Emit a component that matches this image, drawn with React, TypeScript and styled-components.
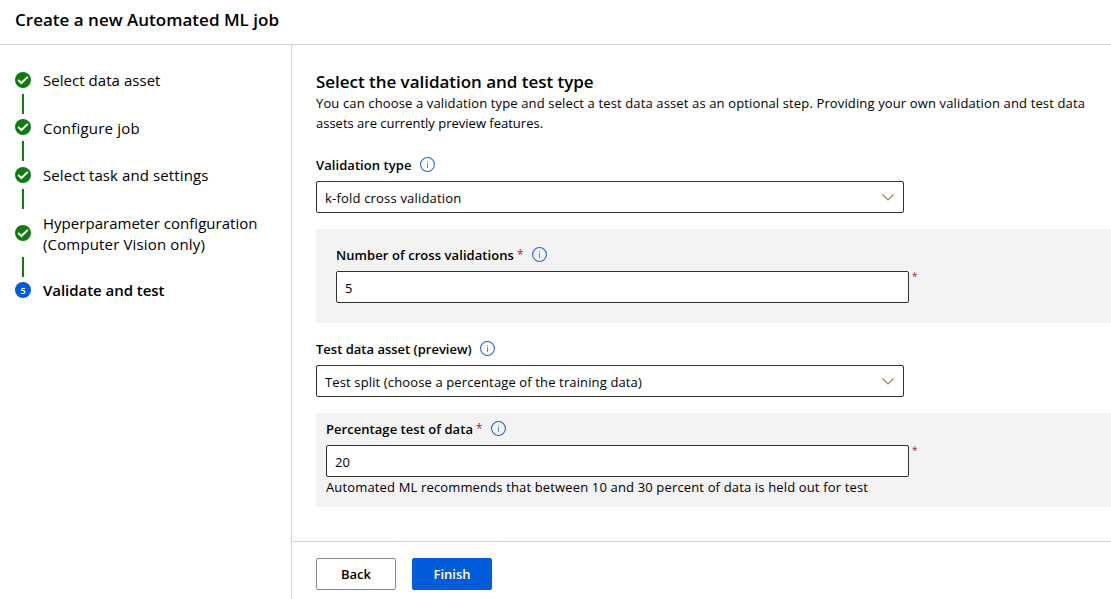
import React from 'react';
import styled, { createGlobalStyle } from 'styled-components';

const GlobalStyle = createGlobalStyle`
  *, *::before, *::after { box-sizing: border-box; }
  body {
    margin: 0;
    background: #fff;
    color: #000;
    font-family: "Open Sans", "Noto Sans", sans-serif;
    font-size: 13px;
    line-height: 20px;
  }
`;

const Page = styled.div`
  display: flex;
  flex-direction: column;
  height: 599px;
  overflow: hidden;
`;

const Header = styled.header`
  flex: none;
  height: 45px;
  padding: 8px 15px 0;
  border-bottom: 1px solid #d2d2d2;
`;

const Title = styled.h1`
  margin: 0;
  font-size: 17px;
  line-height: 24px;
  font-weight: 600;
  letter-spacing: 0.014px;
`;

const Body = styled.div`
  flex: 1;
  display: flex;
  min-height: 0;
`;

const Sidebar = styled.nav`
  flex: none;
  width: 292px;
  padding: 25px 15px 0;
  border-right: 1px solid #d2d2d2;
`;

const Step = styled.div<{ $tall?: boolean }>`
  display: flex;
  align-items: center;
  gap: 12px;
  height: ${p => (p.$tall ? 40 : 20)}px;
`;

const StepMarker = styled.span`
  flex: none;
  width: 16px;
  height: 16px;
  border-radius: 50%;
  background: #015cda;
  color: #fff;
  font-size: 9px;
  line-height: 17px;
  font-weight: 600;
  text-align: center;
`;

const StepLabel = styled.span<{ $active?: boolean; $drop?: number }>`
  padding-top: ${p => p.$drop ?? 0}px;
  font-size: 15px;
  line-height: 20px;
  white-space: nowrap;
  font-weight: ${p => (p.$active ? 600 : 400)};
  letter-spacing: ${p => (p.$active ? -0.041 : 0)}px;
`;

const StepLine = styled.span<{ $tracking: number; $tall: boolean }>`
  display: block;
  line-height: ${p => (p.$tall ? 21 : 20)}px;
  letter-spacing: ${p => p.$tracking}px;
`;

const Connector = styled.div<{ $after: number }>`
  width: 2px;
  height: 20px;
  margin: 4px 0 ${p => p.$after}px 7px;
  background: #107c10;
`;

const Main = styled.main`
  flex: 1;
  display: flex;
  flex-direction: column;
  min-width: 0;
`;

const Content = styled.div`
  flex: 1;
  padding: 25px 0 0 24px;
`;

const Heading = styled.h2`
  margin: 0;
  font-size: 17px;
  line-height: 23px;
  font-weight: 600;
  letter-spacing: -0.034px;
`;

const Text = styled.p<{ $tracking: number }>`
  margin: 0;
  white-space: nowrap;
  letter-spacing: ${p => p.$tracking}px;
`;

const Field = styled.div<{ $top: number }>`
  margin-top: ${p => p.$top}px;
`;

const Label = styled.label<{ $tracking: number }>`
  display: flex;
  align-items: center;
  height: 20px;
  margin-bottom: 6px;
  font-weight: 600;
  letter-spacing: ${p => p.$tracking}px;
  white-space: nowrap;
`;

const LabelStar = styled.span`
  width: 6px;
  margin: 0 1px 0 3px;
  color: #a4262c;
  font-weight: 400;
  font-size: 12px;
`;

const InfoSvg = styled.svg`
  flex: none;
  width: 15px;
  height: 15px;
  margin: -1px 0 0 8px;
`;

const Select = styled.div`
  display: flex;
  align-items: center;
  justify-content: space-between;
  width: 588px;
  height: 32px;
  padding: 2px 9px 0 8px;
  border: 1px solid #323130;
  border-radius: 2px;
  background: #fff;
`;

const SelectValue = styled.span<{ $tracking: number }>`
  letter-spacing: ${p => p.$tracking}px;
`;

const ChevronSvg = styled.svg`
  width: 12px;
  height: 7px;
  margin-top: -1px;
`;

const InputRow = styled.div`
  display: flex;
  align-items: flex-start;
`;

const Input = styled.input<{ $width: number }>`
  width: ${p => p.$width}px;
  height: 32px;
  padding: 2px 8px 0;
  border: 1px solid #323130;
  border-radius: 2px;
  outline: none;
  background: #fff;
  color: #000;
  font: inherit;
`;

const InputStar = styled.span`
  margin: -4px 0 0 3px;
  color: #a4262c;
  font-size: 10px;
  line-height: 18px;
`;

const Panel = styled.section<{ $pad: string }>`
  height: 94px;
  margin-top: 16px;
  padding: ${p => p.$pad};
  background: #f3f3f3;
`;

const Footer = styled.footer`
  flex: none;
  display: flex;
  gap: 16px;
  height: 58px;
  padding: 16px 24px 0;
  border-top: 1px solid #d2d2d2;
`;

const Button = styled.button<{ $primary?: boolean }>`
  width: 80px;
  height: 32px;
  padding: 0;
  border: 1px solid ${p => (p.$primary ? '#015cda' : '#8a8886')};
  border-radius: 2px;
  background: ${p => (p.$primary ? '#015cda' : '#fff')};
  color: ${p => (p.$primary ? '#fff' : '#000')};
  font: inherit;
  font-weight: 600;
`;

const DoneIcon = () => (
  <svg width="16" height="16" viewBox="0 0 16 16">
    <circle cx="8" cy="8" r="8" fill="#107c10" />
    <path d="M3.2 7.9 6.4 11 12.8 4.9" fill="none" stroke="#fff" strokeWidth="2" />
  </svg>
);

const InfoIcon = () => (
  <InfoSvg viewBox="0 0 15 15">
    <circle cx="7.5" cy="7.5" r="6.95" fill="none" stroke="#2566d4" strokeWidth="1.1" />
    <path d="M7.5 6V11M7.5 4V5" fill="none" stroke="#5a8be0" strokeWidth="1" />
  </InfoSvg>
);

const Chevron = () => (
  <ChevronSvg viewBox="0 0 12 7">
    <path d="M0.4 0.5 6 6 11.6 0.5" fill="none" stroke="#b07a4c" strokeWidth="1.1" />
  </ChevronSvg>
);

const steps = [
  { lines: ['Select data asset'], tracking: [0.043], drop: 0, after: 3 },
  { lines: ['Configure job'], tracking: [0.2], drop: 2, after: 4 },
  { lines: ['Select task and settings'], tracking: [0.1], drop: 0, after: 4 },
  { lines: ['Hyperparameter configuration', '(Computer Vision only)'], tracking: [0.025, 0.15], drop: 2, after: 3 },
];

export default function App() {
  return (
    <Page>
      <GlobalStyle />
      <Header>
        <Title>Create a new Automated ML job</Title>
      </Header>
      <Body>
        <Sidebar>
          {steps.map(s => {
            const tall = s.lines.length > 1;
            return (
              <React.Fragment key={s.lines[0]}>
                <Step $tall={tall}>
                  <DoneIcon />
                  <StepLabel $drop={s.drop}>
                    {s.lines.map((line, i) => (
                      <StepLine key={line} $tracking={s.tracking[i]} $tall={tall}>{line}</StepLine>
                    ))}
                  </StepLabel>
                </Step>
                <Connector $after={s.after} />
              </React.Fragment>
            );
          })}
          <Step>
            <StepMarker>5</StepMarker>
            <StepLabel $active>Validate and test</StepLabel>
          </Step>
        </Sidebar>
        <Main>
          <Content>
            <Heading>Select the validation and test type</Heading>
            <Text $tracking={0.133}>
              You can choose a validation type and select a test data asset as an optional step. Providing your own validation and test data
            </Text>
            <Text $tracking={0}>assets are currently preview features.</Text>
            <Field $top={22}>
              <Label $tracking={0.064}>Validation type<InfoIcon /></Label>
              <Select><SelectValue $tracking={0.19}>k-fold cross validation</SelectValue><Chevron /></Select>
            </Field>
            <Panel $pad="16px 0 0 20px">
              <Label $tracking={0.07}>Number of cross validations<LabelStar>*</LabelStar><InfoIcon /></Label>
              <InputRow><Input $width={573} defaultValue="5" /><InputStar>*</InputStar></InputRow>
            </Panel>
            <Field $top={16}>
              <Label $tracking={0}>Test data asset (preview)<InfoIcon /></Label>
              <Select><SelectValue $tracking={0.13}>Test split (choose a percentage of the training data)</SelectValue><Chevron /></Select>
            </Field>
            <Panel $pad="6px 0 0 10px">
              <Label $tracking={0.049}>Percentage test of data<LabelStar>*</LabelStar><InfoIcon /></Label>
              <InputRow><Input $width={583} defaultValue="20" /><InputStar>*</InputStar></InputRow>
              <Text $tracking={0.15}>Automated ML recommends that between 10 and 30 percent of data is held out for test</Text>
            </Panel>
          </Content>
          <Footer>
            <Button>Back</Button>
            <Button $primary>Finish</Button>
          </Footer>
        </Main>
      </Body>
    </Page>
  );
}
